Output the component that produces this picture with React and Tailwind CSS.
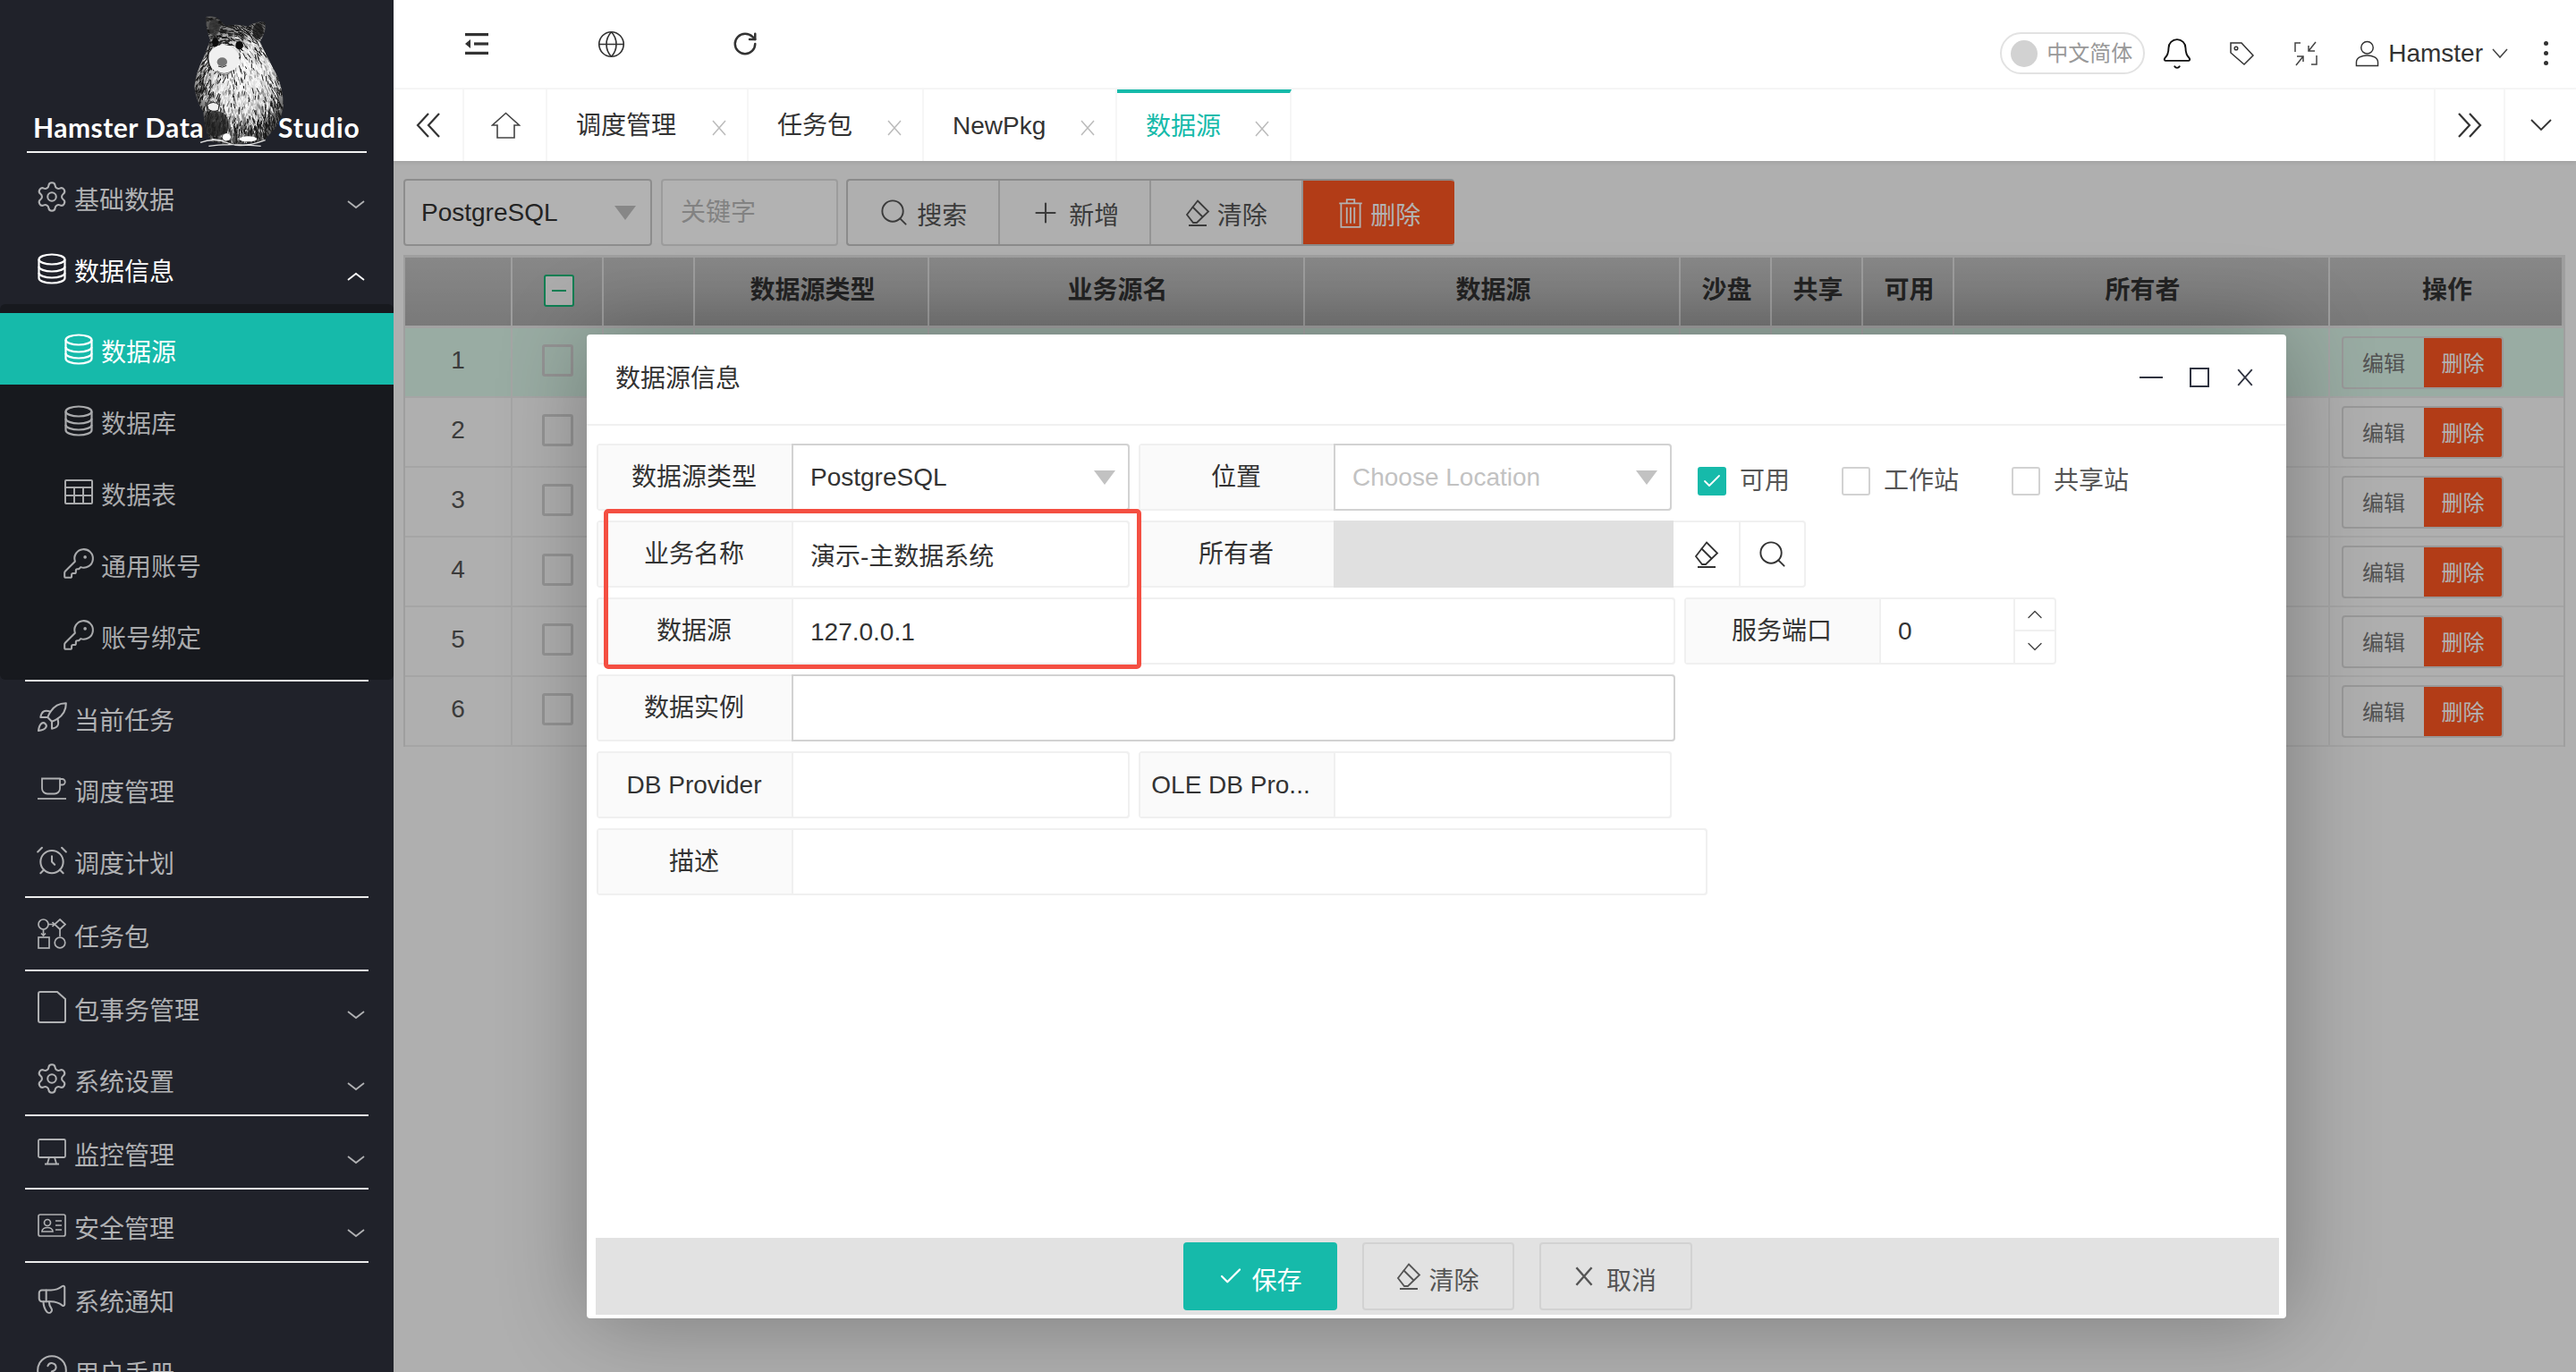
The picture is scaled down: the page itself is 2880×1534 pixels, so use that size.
import React from 'react';
import { Settings, KeyRound, Rocket, AlarmClock, Megaphone, CircleHelp, Globe, RotateCw, Search, Plus, Bell, Check, ChevronDown, ChevronUp } from 'lucide-react';

let seed = 11;
const rnd = () => { seed = (seed * 16807) % 2147483647; return seed / 2147483647; };
function furPaths() {
  const groups = [[], [], []];
  for (let i = 0; i < 2600; i++) {
    const x = 50 + rnd() * 305;
    const y = 25 + rnd() * 430;
    const dx = x - 170;
    const dy = y - 130;
    const a = Math.atan2(dy, dx) * 0.45 + Math.PI / 2 * 0.6 + (rnd() - 0.5) * 0.7;
    const l = 8 + rnd() * 14;
    const edge = Math.hypot((x - 215) / 135, (y - 250) / 200);
    const pDark = Math.min(0.85, Math.max(0.08, (edge - 0.45) * 1.25));
    const v = rnd();
    const g = v < pDark ? 2 : v < pDark + 0.2 ? 1 : 0;
    groups[g].push(`M${x.toFixed(0)} ${y.toFixed(0)}L${(x + Math.cos(a) * l).toFixed(0)} ${(y + Math.sin(a) * l).toFixed(0)}`);
  }
  return groups.map(g => g.join(''));
}
const FUR = furPaths();
const SIL = 'M92 26 Q118 22 135 35 L158 58 Q195 48 232 60 Q255 40 288 44 Q296 70 272 110 Q290 150 325 215 Q352 270 350 330 Q340 390 300 425 L280 445 L170 455 L110 445 Q88 420 82 345 Q58 310 52 260 Q58 210 82 165 Q92 140 105 105 Q88 60 92 26Z';

function Hamster() {
  return (
    <svg className="absolute left-0 top-0" width="440" height="180" viewBox="0 0 440 180">
      <defs>
        <clipPath id="hs"><path d={SIL} /></clipPath>
        <radialGradient id="hg" gradientUnits="userSpaceOnUse" cx="205" cy="220" r="190">
          <stop offset="0" stopColor="#f4f4f4" />
          <stop offset="0.6" stopColor="#c8c8c8" />
          <stop offset="1" stopColor="#555" />
        </radialGradient>
      </defs>
      <g transform="translate(200 10) scale(0.3333)">
        <path d={SIL} fill="url(#hg)" />
        <g clipPath="url(#hs)">
          <path d={FUR[0]} stroke="#fff" strokeWidth="2.500" fill="none" />
          <path d={FUR[1]} stroke="#777" strokeWidth="2.500" fill="none" />
          <path d={FUR[2]} stroke="#161616" strokeWidth="3" fill="none" />
          <ellipse cx="125" cy="385" rx="42" ry="42" fill="#222" opacity="0.75" />
          <ellipse cx="118" cy="62" rx="18" ry="28" fill="#333" opacity="0.8" />
          <ellipse cx="265" cy="75" rx="18" ry="26" fill="#1a1a1a" opacity="0.85" />
        </g>
        <ellipse cx="150" cy="168" rx="52" ry="48" fill="#f0f0f0" />
        <path d="M104 125 Q88 170 110 205" stroke="#222" strokeWidth="5" fill="none" />
        <ellipse cx="145" cy="178" rx="17" ry="15" fill="#777" />
        <path d="M132 192 Q146 200 160 190" stroke="#222" strokeWidth="3" fill="none" />
        <path d="M128 208 Q150 226 178 208 Q160 232 130 214Z" fill="#fff" stroke="#222" strokeWidth="2" />
        <ellipse cx="122" cy="112" rx="11" ry="14" fill="#0c0c0c" />
        <ellipse cx="203" cy="122" rx="13" ry="14" fill="#0c0c0c" />
        <path d="M95 322 Q115 305 135 322 L132 340 Q112 348 98 335Z" fill="#eee" stroke="#222" strokeWidth="3" />
        <ellipse cx="160" cy="430" rx="14" ry="12" fill="#fff" />
        <ellipse cx="232" cy="436" rx="30" ry="9" fill="#fff" />
        <path d="M72 448 Q120 430 165 450 T290 440 M100 460 Q170 450 275 460 M110 436 L150 442" stroke="#e2e2e2" strokeWidth="4" fill="none" />
      </g>
    </svg>
  );
}

const Db = ({ s = 32 }) => (
  <svg width={s} height={s + 3} viewBox="0 0 32 35" fill="none" stroke="currentColor" strokeWidth="2.200">
    <ellipse cx="16" cy="7" rx="14.500" ry="5.500" />
    <path d="M1.500 7v21c0 3 6.500 5.500 14.500 5.500S30.500 31 30.500 28V7" />
    <path d="M1.500 15c0 3 6.500 5.500 14.500 5.500S30.500 18 30.500 15M1.500 22c0 3 6.500 5.500 14.500 5.500S30.500 25 30.500 22" />
  </svg>
);
const TableI = () => (
  <svg width="32" height="28" viewBox="0 0 32 28" fill="none" stroke="currentColor" strokeWidth="2">
    <rect x="1" y="1" width="30" height="26" rx="1" />
    <path d="M1 9h30M1 18h30M11 9v18M21 9v18" />
  </svg>
);
const Cup = () => (
  <svg width="32" height="26" viewBox="0 0 32 26" fill="none" stroke="currentColor" strokeWidth="1.800">
    <path d="M5 1.500h20v11a6 6 0 0 1-6 6H11a6 6 0 0 1-6-6z" />
    <path d="M25 2h2.500a3.200 3.200 0 0 1 0 6.500H25" />
    <path d="M0 24h32" />
  </svg>
);
const Flow = () => (
  <svg width="32" height="34" viewBox="0 0 32 34" fill="none" stroke="currentColor" strokeWidth="1.700">
    <circle cx="6.500" cy="6.500" r="5.500" />
    <path d="M12 6.500h7M16.500 4l2.500 2.500L16.500 9" />
    <path d="M25 1l6 5.500-6 5.500-6-5.500z" />
    <path d="M6.500 12v7M25 12v8" />
    <path d="M4 16.500l2.500 2.500L9 16.500" />
    <rect x="1" y="21" width="12" height="12" />
    <circle cx="25" cy="27" r="5.800" />
  </svg>
);
const FileI = () => (
  <svg width="32" height="36" viewBox="0 0 32 36" fill="none" stroke="currentColor" strokeWidth="2">
    <path d="M3 1h19l9 8v24a2 2 0 0 1-2 2H3a2 2 0 0 1-2-2V3a2 2 0 0 1 2-2z" />
  </svg>
);
const Mon = () => (
  <svg width="32" height="30" viewBox="0 0 32 30" fill="none" stroke="currentColor" strokeWidth="1.800">
    <rect x="1" y="1" width="30" height="20" rx="1.500" />
    <path d="M13 21l-2 7M19 21l2 7M8 28.500h16" />
  </svg>
);
const Card = () => (
  <svg width="32" height="26" viewBox="0 0 32 26" fill="none" stroke="currentColor" strokeWidth="1.700">
    <rect x="1" y="1" width="30" height="24" rx="2" />
    <circle cx="11" cy="10" r="3.500" />
    <path d="M5 20c0-6 12-6 12 0zM20 8h7M20 13h7M20 18h7" />
  </svg>
);
const Eraser = ({ w = 28, h = 30 }) => (
  <svg width={w} height={h} viewBox="0 0 28 30" fill="none" stroke="currentColor" strokeWidth="1.800">
    <path d="M14 1.500l12 12L13 26H9L2 17z" />
    <path d="M8 8l12 12M4 29h20" />
  </svg>
);
const Trash = () => (
  <svg width="28" height="34" viewBox="0 0 26 32" fill="none" stroke="currentColor" strokeWidth="1.700">
    <path d="M1 6h24M9 6V2h8v4M3 6v25h20V6M9 10v17M13 10v17M17 10v17" />
  </svg>
);
const Home = () => (
  <svg width="33" height="30" viewBox="0 0 33 30" fill="none" stroke="#444" strokeWidth="1.600">
    <path d="M16.500 1.500L1.500 15H7v14h19V15h5.500z" />
  </svg>
);
const MenuFold = () => (
  <svg width="26" height="24" viewBox="0 0 26 24" fill="#333">
    <rect x="0" y="0" width="26" height="3.200" />
    <rect x="0" y="20.800" width="26" height="3.200" />
    <rect x="10" y="10.400" width="16" height="3.200" />
    <path d="M0 12l6-5v10z" />
  </svg>
);
const Cross = ({ s = 18, c = '#bbb', w = 1.500 }) => (
  <svg width={s} height={s} viewBox="0 0 18 18" fill="none" stroke={c} strokeWidth={w}><path d="M2 1l14 16M16 1L2 17" /></svg>
);
const Tri = () => (
  <svg width="24" height="16" viewBox="0 0 24 16" fill="#c2c2c2"><path d="M0 0h24L12 16z" /></svg>
);
const Chev = ({ up, c = 'currentColor' }) => (
  <svg width="20" height="10" viewBox="0 0 20 10" fill="none" stroke={c} strokeWidth="1.800">
    <path d={up ? 'M1 9l9-7 9 7' : 'M1 1l9 7 9-7'} />
  </svg>
);
const DoubleArrow = ({ right }) => (
  <svg width="28" height="28" viewBox="0 0 28 28" fill="none" stroke="#333" strokeWidth="2.200">
    <path d={right ? 'M2 1l12 13L2 27M14 1l12 13-12 13' : 'M14 1L2 14l12 13M26 1L14 14l12 13'} />
  </svg>
);

function NavItem({ icon, label, chev, active, up }) {
  return (
    <div className={`flex h-[80px] items-center pl-[42px] ${active ? 'text-white' : 'text-[#b0b1b3]'}`}>
      <span className="flex w-[32px] justify-center">{icon}</span>
      <span className="ml-[9px] pt-[10px] text-[28px]">{label}</span>
      {chev && <span className="ml-auto mr-[32px] mt-[18px] flex"><Chev up={up} /></span>}
    </div>
  );
}
function SubItem({ icon, label, active }) {
  return (
    <div className={`flex h-[80px] items-center pl-[72px] ${active ? 'bg-[#16baaa] text-white' : 'text-[#a9aaac]'}`}>
      <span className="flex w-[32px] justify-center">{icon}</span>
      <span className="ml-[9px] pt-[10px] text-[28px]">{label}</span>
    </div>
  );
}
const Line = () => <div className="mx-[28px] h-[2px] bg-[#ececec]" />;
const G = { size: 38, strokeWidth: 1.3, className: 'shrink-0' };

function Sidebar() {
  const logoText = "absolute top-[120px] font-['Lato',sans-serif] text-[30px] font-bold leading-[44px] text-white";
  return (
    <aside className="h-full w-[440px] shrink-0 overflow-hidden bg-[#20222a]">
      <div className="relative h-[180px]">
        <Hamster />
        <span className={`${logoText} left-[37px] tracking-[0.5px]`}>Hamster Data</span>
        <span className={`${logoText} left-[311px] tracking-[1px]`}>Studio</span>
        <div className="absolute left-[30px] top-[169px] h-[2px] w-[380px] bg-[#f2f2f2]" />
      </div>
      <NavItem icon={<Settings {...G} />} label="基础数据" chev />
      <NavItem icon={<Db />} label="数据信息" chev up active />
      <div className="rounded-[6px] bg-[#17191e] py-[10px]">
        <SubItem icon={<Db />} label="数据源" active />
        <SubItem icon={<Db />} label="数据库" />
        <SubItem icon={<TableI />} label="数据表" />
        <SubItem icon={<KeyRound {...G} />} label="通用账号" />
        <SubItem icon={<KeyRound {...G} />} label="账号绑定" />
      </div>
      <Line />
      <NavItem icon={<Rocket {...G} />} label="当前任务" />
      <NavItem icon={<Cup />} label="调度管理" />
      <NavItem icon={<AlarmClock {...G} />} label="调度计划" />
      <Line />
      <NavItem icon={<Flow />} label="任务包" />
      <Line />
      <NavItem icon={<FileI />} label="包事务管理" chev />
      <NavItem icon={<Settings {...G} />} label="系统设置" chev />
      <Line />
      <NavItem icon={<Mon />} label="监控管理" chev />
      <Line />
      <NavItem icon={<Card />} label="安全管理" chev />
      <Line />
      <NavItem icon={<Megaphone {...G} />} label="系统通知" />
      <NavItem icon={<CircleHelp {...G} />} label="用户手册" />
    </aside>
  );
}

function TopBar() {
  return (
    <div className="flex h-[100px] items-start border-b-2 border-[#f6f6f6] bg-white">
      <div className="flex h-[98px] items-center pl-[18px] text-[#333]">
        <span className="flex w-[150px] justify-center"><MenuFold /></span>
        <span className="flex w-[150px] justify-center"><Globe size={33} strokeWidth={1.2} /></span>
        <span className="flex w-[150px] justify-center"><RotateCw size={30} strokeWidth={2} /></span>
      </div>
      <div className="ml-auto flex items-center pr-[30px] pt-[36px] text-[#333]">
        <div className="flex h-[47px] w-[162px] items-center rounded-full border-2 border-[#e2e2e2] pl-[10px]">
          <span className="h-[30px] w-[30px] rounded-full bg-[#d2d2d2]" />
          <span className="ml-[10px] whitespace-nowrap text-[24px] leading-none text-[#999]">中文简体</span>
        </div>
        <span className="flex w-[72px] justify-center text-[#111]"><Bell size={38} strokeWidth={1.2} /></span>
        <span className="flex w-[72px] justify-center">
          <svg width="30" height="30" viewBox="0 0 30 30" fill="none" stroke="#333" strokeWidth="1.500"><path d="M3 3h12l13 14-10 10L3 14z" /><circle cx="9" cy="9" r="1.800" /></svg>
        </span>
        <span className="flex w-[71px] justify-center">
          <svg width="26" height="28" viewBox="0 0 26 28" fill="none" stroke="#444" strokeWidth="1.500"><path d="M1 12V2h6M25 16v10h-6M24 1l-8 10M16 5v6h7M2 27l8-10M10 23v-6H3" /></svg>
        </span>
        <span className="ml-[20px] flex w-[27px]">
          <svg width="28" height="30" viewBox="0 0 28 30" fill="none" stroke="#333" strokeWidth="1.500"><circle cx="14" cy="8" r="7" /><path d="M1.500 29v-4c0-5 6-8 12.500-8s12.500 3 12.500 8v4z" /></svg>
        </span>
        <span className="ml-[10px] text-[28px] leading-[47px]">Hamster</span>
        <span className="ml-[10px] flex"><svg width="18" height="12" viewBox="0 0 18 12" fill="none" stroke="#444" strokeWidth="1.500"><path d="M1 1l8 9 8-9" /></svg></span>
        <span className="ml-[40px] flex w-[6px] flex-col gap-[6px]">
          <i className="h-[5px] w-[5px] rounded-full bg-[#333]" />
          <i className="h-[5px] w-[5px] rounded-full bg-[#333]" />
          <i className="h-[5px] w-[5px] rounded-full bg-[#333]" />
        </span>
      </div>
    </div>
  );
}

function Tab({ label, w, active }) {
  return (
    <div className={`flex h-[80px] items-center border-r-2 border-[#f6f6f6] pl-[32px] ${w} ${active ? 'border-t-4 border-t-[#16baaa] text-[#16baaa]' : 'pt-[2px] text-[#333]'}`}>
      <span className="whitespace-nowrap text-[28px]">{label}</span>
      <span className="ml-auto mr-[22px] mt-[4px] flex"><Cross /></span>
    </div>
  );
}

function TabBar() {
  return (
    <div className="relative z-10 flex h-[80px] bg-white shadow-[0_2px_4px_rgba(0,0,0,0.08)]">
      <div className="flex w-[79px] items-center justify-center border-r-2 border-[#f6f6f6]"><DoubleArrow /></div>
      <div className="flex w-[93px] items-center justify-center border-r-2 border-[#f6f6f6] pl-[2px]"><Home /></div>
      <Tab label="调度管理" w="w-[225px]" />
      <Tab label="任务包" w="w-[196px]" />
      <Tab label="NewPkg" w="w-[216px]" />
      <Tab label="数据源" w="w-[195px]" active />
      <div className="ml-auto flex w-[80px] items-center justify-center border-x-2 border-[#f6f6f6]"><DoubleArrow right /></div>
      <div className="flex w-[79px] items-center justify-center">
        <svg width="24" height="14" viewBox="0 0 24 14" fill="none" stroke="#333" strokeWidth="1.800"><path d="M1 1l11 11L23 1" /></svg>
      </div>
    </div>
  );
}

function ToolBtn({ icon, label, danger }) {
  return (
    <div className={`flex h-full w-[170px] items-center justify-center gap-[8px] ${danger ? 'bg-[#ff5722] pl-[2px] text-white' : 'border-r-2 border-[#d4d4d4] text-[#555]'}`}>
      {icon}
      <span className="pt-[8px] text-[28px]">{label}</span>
    </div>
  );
}

const COLS = 'grid grid-cols-[120px_102px_102px_262px_420px_420px_102px_102px_102px_420px_261px]';
const HEADS = ['', '', '', '数据源类型', '业务源名', '数据源', '沙盘', '共享', '可用', '所有者', '操作'];

function TableArea() {
  return (
    <div className="ml-[11px] mt-[10px] w-[2417px] border-x-2 border-t-[3px] border-[#e4e4e4]">
      <div className={`${COLS} h-[79px] border-b-[3px] border-[#e8e8e8] bg-gradient-to-b from-[#c3c3c3] to-[#aeaeae]`}>
        {HEADS.map((h, i) => (
          <div key={i} className="flex items-center justify-center border-r-2 border-[#e2e2e2] pb-[2px] pl-[3px] text-[28px] font-bold text-[#333]">
            {i === 1 ? (
              <span className="flex h-[36px] w-[34px] items-center justify-center rounded-[3px] border-2 border-[#16b777] bg-[#f6f6f6]"><i className="h-[2px] w-[16px] bg-[#16b777]" /></span>
            ) : h}
          </div>
        ))}
      </div>
      {[1, 2, 3, 4, 5, 6].map(n => (
        <div key={n} className={`${COLS} h-[78px] border-b-2 border-[#ececec] ${n === 1 ? 'bg-[#dcf6ea]' : ''}`}>
          <div className="flex items-center justify-center border-r-2 border-[#ececec] pb-[4px] text-[28px] text-[#555]">{n}</div>
          <div className="flex items-center justify-center border-r-2 border-[#ececec] pb-[4px]">
            <span className="h-[36px] w-[35px] rounded-[3px] border-[3px] border-[#d4d4d4]" />
          </div>
          {[0, 1, 2, 3, 4, 5, 6, 7].map(k => <div key={k} className="border-r-2 border-[#ececec]" />)}
          <div className="flex items-center pl-[13px]">
            <div className="flex h-[59px] w-[181px] overflow-hidden rounded-[4px] border-2 border-[#dcdcdc]">
              <span className="flex w-[90px] items-center justify-center pt-[4px] text-[24px] text-[#777]">编辑</span>
              <span className="flex flex-1 items-center justify-center bg-[#ff5722] pt-[4px] text-[24px] text-white">删除</span>
            </div>
          </div>
        </div>
      ))}
    </div>
  );
}

function Field({ label, w, children, dark, labelPad = 'pr-[2px]' }) {
  return (
    <div className={`flex h-[75px] shrink-0 rounded-[4px] border-2 border-[#f0f0f0] ${w}`}>
      <div className={`flex w-[216px] shrink-0 items-center justify-center whitespace-nowrap bg-[#fafafa] text-[28px] text-[#333] ${labelPad}`}>{label}</div>
      <div className={`-my-[2px] -mr-[2px] flex min-w-0 flex-1 items-center rounded-r-[4px] border-2 pl-[19px] pr-[16px] text-[28px] text-[#333] ${dark ? 'border-[#d2d2d2]' : 'border-[#f0f0f0]'}`}>{children}</div>
    </div>
  );
}

function Box({ on, label, mr }) {
  return (
    <div className={`flex items-center ${mr}`}>
      <span className={`flex h-[32px] w-[32px] items-center justify-center rounded-[3px] border-2 ${on ? 'border-[#16baaa] bg-[#16baaa]' : 'border-[#d2d2d2] bg-white'}`}>
        {on && <Check size={24} strokeWidth={1.8} color="#fff" />}
      </span>
      <span className="ml-[15px] text-[28px] text-[#555]">{label}</span>
    </div>
  );
}

function Dialog() {
  return (
    <div className="absolute left-[216px] top-[194px] flex h-[1100px] w-[1900px] flex-col rounded-[4px] bg-white shadow-[2px_2px_100px_rgba(0,0,0,0.3)]">
      <div className="flex h-[102px] shrink-0 items-center border-b-2 border-[#f0f0f0] pl-[32px] pr-[36px]">
        <span className="text-[28px] text-[#333]">数据源信息</span>
        <div className="ml-auto flex items-center gap-[30px] pb-[4px]">
          <i className="h-[2px] w-[26px] bg-[#2f3340]" />
          <i className="h-[22px] w-[22px] border-2 border-[#2f3340]" />
          <Cross s={20} c="#2f3340" w={1.600} />
        </div>
      </div>
      <div className="flex flex-1 flex-col gap-[11px] pl-[11px] pt-[20px]">
        <div className="flex items-center gap-[10px]">
          <Field label="数据源类型" w="w-[596px]" dark><span>PostgreSQL</span><span className="-mr-[2px] ml-auto flex"><Tri /></span></Field>
          <Field label="位置" w="w-[596px]" dark><span className="text-[#c2c2c2]">Choose Location</span><span className="-mr-[2px] ml-auto flex"><Tri /></span></Field>
          <div className="ml-[19px] flex pt-[8px]">
            <Box on label="可用" mr="mr-[58px]" />
            <Box label="工作站" mr="mr-[59px]" />
            <Box label="共享站" />
          </div>
        </div>
        <div className="flex gap-[10px]">
          <Field label="业务名称" w="w-[596px]"><span className="pt-[6px]">演示-主数据系统</span></Field>
          <div className="flex h-[75px] w-[746px] rounded-[4px] border-2 border-[#f0f0f0]">
            <div className="flex w-[216px] items-center justify-center bg-[#fafafa] pr-[2px] text-[28px] text-[#333]">所有者</div>
            <div className="-my-[2px] w-[380px] bg-[#e0e0e0]" />
            <div className="flex w-[75px] items-center justify-center border-r-2 border-[#f0f0f0] text-[#333]"><Eraser /></div>
            <div className="flex flex-1 items-center justify-center text-[#333]"><Search size={35} strokeWidth={1.300} /></div>
          </div>
        </div>
        <div className="flex gap-[10px]">
          <Field label="数据源" w="w-[1206px]"><span className="pt-[2px]">127.0.0.1</span></Field>
          <div className="flex h-[75px] w-[416px] rounded-[4px] border-2 border-[#f0f0f0]">
            <div className="flex w-[216px] items-center justify-center bg-[#fafafa] pr-[2px] text-[28px] text-[#333]">服务端口</div>
            <div className="flex w-[152px] items-center border-x-2 border-[#f0f0f0] pl-[19px] text-[28px] text-[#333]">0</div>
            <div className="flex flex-1 flex-col text-[#444]">
              <span className="flex h-1/2 items-center justify-center border-b-2 border-[#f0f0f0]"><ChevronUp size={28} strokeWidth={1.200} /></span>
              <span className="flex h-1/2 items-center justify-center"><ChevronDown size={28} strokeWidth={1.200} /></span>
            </div>
          </div>
        </div>
        <Field label="数据实例" w="w-[1206px]" dark />
        <div className="flex gap-[10px]">
          <Field label="DB Provider" w="w-[596px]" />
          <Field label="OLE DB Pro..." w="w-[596px]" labelPad="pr-[14px]" />
        </div>
        <Field label="描述" w="w-[1242px]" />
      </div>
      <div className="mb-[4px] ml-[10px] mr-[8px] flex h-[86px] shrink-0 items-center justify-center gap-[28px] bg-[#e2e2e2]">
        <div className="flex h-[76px] w-[172px] items-center justify-center gap-[8px] rounded-[4px] bg-[#16baaa] text-white">
          <Check size={30} strokeWidth={1.800} /><span className="pt-[12px] text-[28px]">保存</span>
        </div>
        <div className="flex h-[76px] w-[170px] items-center justify-center gap-[8px] rounded-[4px] border-2 border-[#d2d2d2] text-[#555]">
          <Eraser /><span className="pt-[12px] text-[28px]">清除</span>
        </div>
        <div className="flex h-[76px] w-[171px] items-center justify-center gap-[14px] rounded-[4px] border-2 border-[#d2d2d2] text-[#555]">
          <Cross s={22} c="#555" w={2} /><span className="pt-[12px] text-[28px]">取消</span>
        </div>
      </div>
      <div className="absolute left-[19px] top-[195px] h-[179px] w-[601px] rounded-[5px] border-[5px] border-[#f44f42]" />
    </div>
  );
}

export default function App() {
  return (
    <div className="flex h-[1534px] w-[2880px] overflow-hidden bg-white font-['Liberation_Sans','Noto_Sans_CJK_SC',sans-serif]">
      <Sidebar />
      <main className="flex h-full min-w-0 flex-1 flex-col">
        <TopBar />
        <TabBar />
        <section className="relative flex-1 overflow-hidden bg-[#fbfbfb]">
          <div className="flex gap-[10px] pl-[11px] pt-[20px]">
            <div className="flex h-[75px] w-[278px] items-center rounded-[4px] border-2 border-[#cbcbcb] bg-white pl-[18px] pr-[16px] text-[28px] text-[#333]">
              PostgreSQL<span className="ml-auto flex"><Tri /></span>
            </div>
            <div className="flex h-[75px] w-[198px] items-center rounded-[4px] border-2 border-[#e0e0e0] bg-white pl-[20px] text-[28px] text-[#bbb]">关键字</div>
            <div className="-ml-[1px] flex h-[75px] w-[680px] overflow-hidden rounded-[4px] border-y-2 border-l-2 border-[#c8c8c8] pr-0">
              <ToolBtn icon={<Search size={35} strokeWidth={1.300} />} label="搜索" />
              <ToolBtn icon={<Plus size={36} strokeWidth={1.400} />} label="新增" />
              <ToolBtn icon={<Eraser />} label="清除" />
              <ToolBtn icon={<Trash />} label="删除" danger />
            </div>
          </div>
          <TableArea />
          <div className="absolute inset-0 bg-black/30" />
          <Dialog />
        </section>
      </main>
    </div>
  );
}
